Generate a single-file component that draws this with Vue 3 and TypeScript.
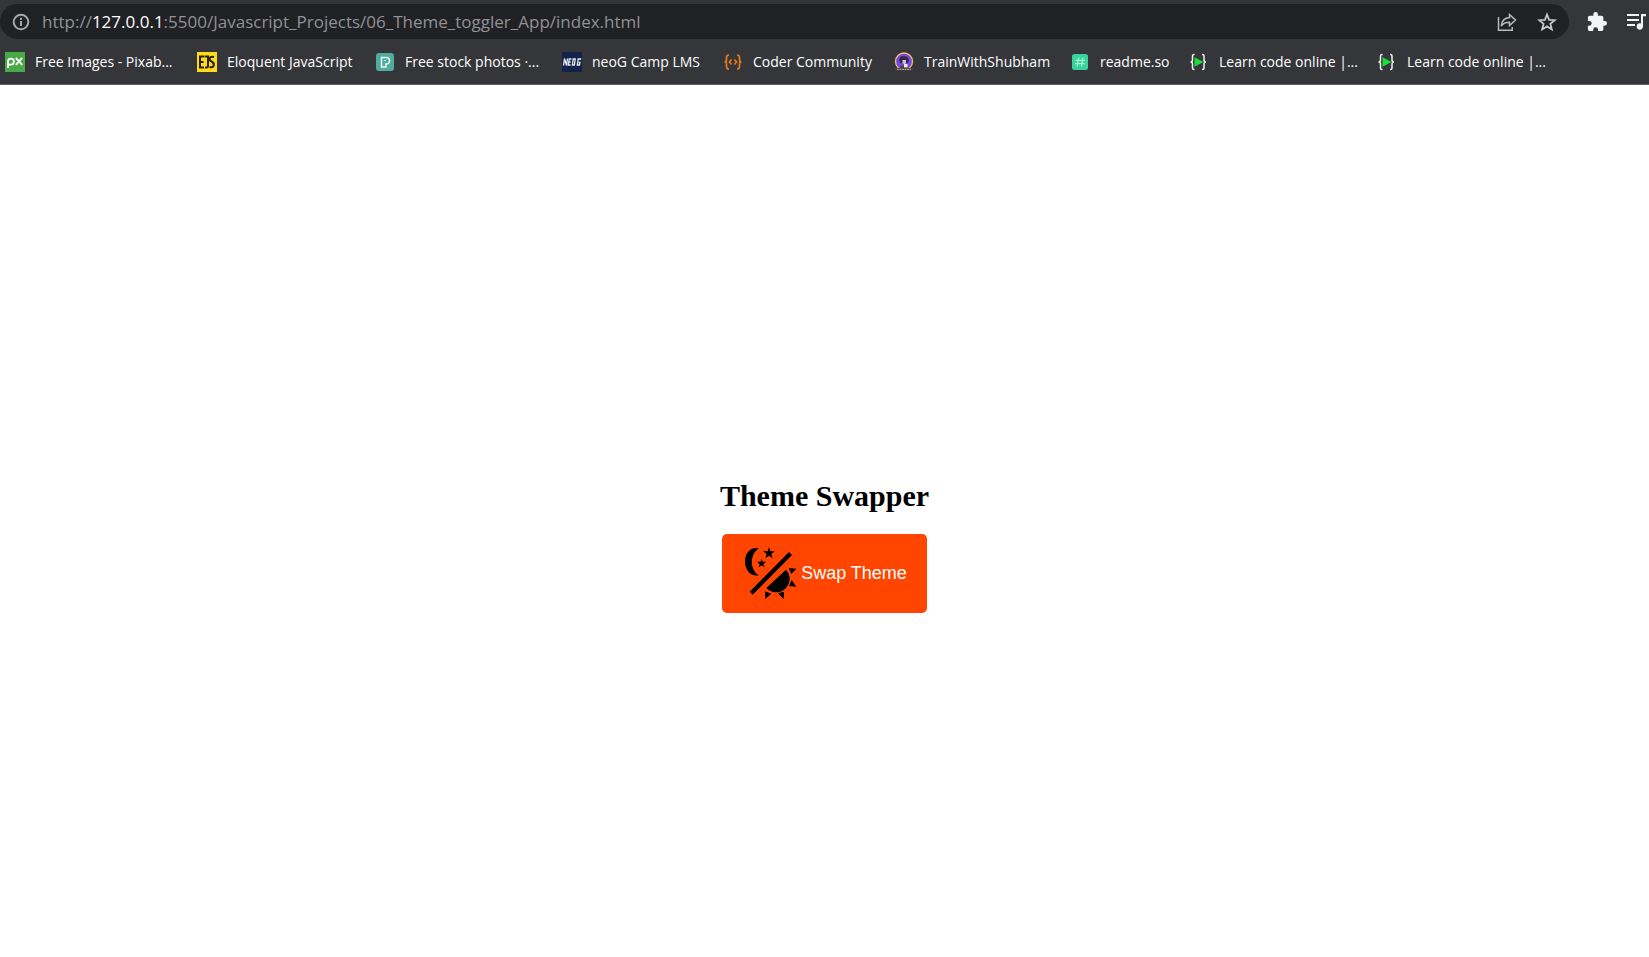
<script setup lang="ts">
import { ref } from 'vue'

interface Bookmark {
  icon: string
  label: string
}

const bookmarks: Bookmark[] = [
  { icon: 'px', label: 'Free Images - Pixab...' },
  { icon: 'ejs', label: 'Eloquent JavaScript' },
  { icon: 'pexels', label: 'Free stock photos ·...' },
  { icon: 'neog', label: 'neoG Camp LMS' },
  { icon: 'coder', label: 'Coder Community' },
  { icon: 'train', label: 'TrainWithShubham' },
  { icon: 'readme', label: 'readme.so' },
  { icon: 'learn', label: 'Learn code online |...' },
  { icon: 'learn', label: 'Learn code online |...' },
]

const dark = ref(false)
</script>

<template>
  <div class="window">
    <header class="chrome">
      <div class="toolbar">
        <div class="omnibox">
          <button class="icon-button" type="button" aria-label="Site information">
            <svg width="18" height="18" viewBox="0 0 18 18" fill="none" stroke="#a5a8ac" stroke-width="2">
              <circle cx="9" cy="9" r="7.3" />
              <path d="M9 8v5M9 4.8v2" />
            </svg>
          </button>
          <p class="url">http://<span class="host">127.0.0.1</span>:5500/Javascript_Projects/06_Theme_toggler_App/index.html</p>
          <button class="icon-button" type="button" aria-label="Share this page">
            <svg width="20" height="20" viewBox="0 0 20 20" fill="none" stroke="#b9bbbf" stroke-width="1.5">
              <path d="M1.5 5v13.2h13.7V15" />
              <path d="M12.5 2.5 18.5 8l-6 5.5v-3.3c-4 0-6.3 1-8.3 3.8C4.800 9 8 6 12.500 5.600z" />
            </svg>
          </button>
          <button class="icon-button" type="button" aria-label="Bookmark this page">
            <svg width="20" height="20" viewBox="0 0 20 20" fill="none" stroke="#c4c6c9" stroke-width="1.800">
              <path d="m10 2.500 2.100 5.300 5.700.4-4.400 3.600 1.400 5.600-4.800-3-4.800 3 1.400-5.600-4.400-3.600 5.700-.4z" />
            </svg>
          </button>
        </div>
        <button class="icon-button extensions" type="button" aria-label="Extensions">
          <svg width="20" height="20" viewBox="1 1 22 22" fill="#f1f3f4">
            <path d="M20.500 11H19V7c0-1.100-.9-2-2-2h-4V3.500a2.500 2.500 0 0 0-5 0V5H4c-1.100 0-2 .9-2 2v3.800h1.500a2.700 2.700 0 0 1 0 5.400H2V20c0 1.100.9 2 2 2h3.800v-1.500a2.700 2.700 0 0 1 5.400 0V22H17c1.100 0 2-.9 2-2v-4h1.500a2.500 2.500 0 0 0 0-5z" />
          </svg>
        </button>
        <button class="icon-button" type="button" aria-label="Media controls">
          <svg width="20" height="18" viewBox="0 0 20 18" fill="#f1f3f4">
            <path d="M0 1h12v2H0zM0 6h12v2H0zM0 11h8v2H0zM14 1h5v2.300h-3V13.500a3.200 3.200 0 1 1-2-3z" />
          </svg>
        </button>
      </div>

      <nav class="bookmarks" aria-label="Bookmarks">
        <a v-for="(item, index) in bookmarks" :key="index" class="bookmark" href="#">
          <svg class="favicon" width="20" height="20" viewBox="0 0 20 20" aria-hidden="true">
            <template v-if="item.icon === 'px'">
              <path fill="#48a947" d="M0 0h20v20H0z" />
              <g fill="none" stroke="#fff" stroke-width="1.800">
                <path d="M3 16V9a3 3 0 1 1 3 3.600H3" />
                <path d="m10.800 5.800 6.400 7M17.200 5.800l-6.400 7" />
              </g>
            </template>
            <template v-else-if="item.icon === 'ejs'">
              <path fill="#ffd91c" d="M0 0h20v20H0z" />
              <g fill="none" stroke="#27230c" stroke-width="2">
                <path d="M7 4.500H3v11h4M3 10h3.500M7.500 4.500H11V14q0 2-3 1.500M17 5c-5-1.500-5.500 3-2.500 4.500 4 2 2.500 7-2 5.500" />
              </g>
            </template>
            <template v-else-if="item.icon === 'pexels'">
              <rect x="1" y="1" width="18" height="18" rx="3" fill="#4fac9f" />
              <path d="M6.500 5.500h4.800a3.200 3.200 0 0 1 0 6.500H11v3H6.500z" fill="none" stroke="#eef8f6" stroke-width="1.500" />
              <path d="M9 8.500h2" stroke="#d5ece8" />
            </template>
            <template v-else-if="item.icon === 'neog'">
              <path fill="#14214a" d="M0 0h20v20H0z" />
              <path d="m1.500 13.500 1-7 2 7 1-7M9.500 7H7.200l-.9 6h2.300M6.800 10h2M13.200 7h-2l-.8 6h2zM18.300 8l.2-1h-2.300l-.9 6h2.200l.4-2.500h-1.200" fill="none" stroke="#e8eaf0" stroke-width="1.300" />
            </template>
            <template v-else-if="item.icon === 'coder'">
              <g fill="none" stroke="#e87818" stroke-width="1.700">
                <path d="M6 3Q3.500 3 3.500 5.500V8Q3.500 10 1.500 10q2 0 2 2v2.500Q3.500 17 6 17M14 3q2.500 0 2.500 2.500V8q0 2 2 2-2 0-2 2v2.500Q16.500 17 14 17M8.500 7.500 6.500 10l2 2.500M11.500 7.500l2 2.500-2 2.500" />
              </g>
            </template>
            <template v-else-if="item.icon === 'train'">
              <circle cx="10" cy="9.500" r="8.500" fill="#7047ea" stroke="#f1c55b" stroke-width="1.300" />
              <path d="M6 11C4 5 7 3.800 10.200 4.300c4 0 5.600 3 4 6.700z" fill="#33283d" />
              <path d="M8.500 8H12v3l-1.500 1.300L8.500 11z" fill="#d6c4b8" />
              <path d="M6 16c0-4 8-4 8 0z" fill="#4a4054" />
              <path d="M10 12h3.500v3.500H10z" fill="#eee" />
              <path d="M0 15.800h20v3.200H0z" fill="#413a4c" />
              <path d="M3 17.300h14" stroke="#d9b35b" stroke-dasharray="2 .5" />
            </template>
            <template v-else-if="item.icon === 'readme'">
              <rect x="2" y="2" width="16" height="16" rx="2.500" fill="#39d39c" />
              <path d="m8.700 5.500-1.500 9M13 5.500l-1.500 9M5.500 8.300h9.500M5 11.700h9.500" stroke="#a5f5d7" stroke-width="1.200" />
            </template>
            <template v-else>
              <path d="M5.500 2.500H5Q3.500 2.500 3.500 4v4q0 2-2 2 2 0 2 2v4q0 1.500 1.500 1.500h.5M13 2.500h.5Q15 2.500 15 4v4q0 2 2 2-2 0-2 2v4q0 1.500-1.500 1.500H13" fill="none" stroke="#f1f1f1" stroke-width="1.500" />
              <path d="m5.500 5.200 9 4.800-9 4.800z" fill="#17df38" />
            </template>
          </svg>
          <span>{{ item.label }}</span>
        </a>
      </nav>
    </header>

    <main class="page" :class="{ dark }">
      <h1 class="title">Theme Swapper</h1>
      <button class="swap" type="button" @click="dark = !dark">
        <svg width="60" height="60" viewBox="18 21 180 180" aria-hidden="true">
          <path d="M72 37C45 32 30 53 30 77s17 46 42 41C44 103 43 55 72 37z" />
          <path d="m102 33 4 13h14l-11 8 4 13-11-8-11 8 4-13-11-8h14z" />
          <path d="m80 68 3 9h11l-9 7 4 10-9-6-9 6 3-10-8-7h11z" />
          <path d="m162 48 9 9L53 176l-9-9z" />
          <path d="M153 101a40 40 0 0 1-59 55z" />
          <path d="m161 96 23 2-15 16zM170 132l14 20-22-2zM147 167l-1 22-17-17zM90 166l19 7-18 16z" />
        </svg>
        <span>Swap Theme</span>
      </button>
    </main>
  </div>
</template>

<style>
body {
  margin: 0;
}
</style>

<style scoped>
.window {
  display: flex;
  flex-direction: column;
  min-height: 100vh;
  overflow: hidden;
}

.chrome {
  padding-top: 4px;
  background: #35363a;
  border-bottom: 1px solid #5d5e62;
  font-family: "Segoe UI", "Open Sans", sans-serif;
}

.toolbar {
  display: flex;
  align-items: center;
  padding-right: 2px;
}

.omnibox {
  display: flex;
  flex: 1;
  align-items: center;
  height: 35px;
  padding: 0 12px;
  border-radius: 18px;
  background: #202124;
}

.icon-button {
  display: flex;
  flex: none;
  padding: 0;
  border: 0;
  background: none;
}

.omnibox .icon-button + .icon-button {
  margin-left: 20px;
}

.extensions {
  margin: 0 20px 0 18px;
}

.url {
  flex: 1;
  margin: 0 0 0 12px;
  color: #909296;
  font-size: 17px;
  line-height: 24px;
  white-space: nowrap;
}

.host {
  color: #fff;
}

.bookmarks {
  display: grid;
  grid-template-columns: 192px 178px 187px 161px 171px 176px 119px 188px 188px;
  height: 45px;
  padding-left: 5px;
}

.bookmark {
  display: flex;
  align-items: center;
  gap: 10px;
  color: #fff;
  font-size: 14px;
  line-height: 20px;
  text-decoration: none;
  white-space: nowrap;
}

.favicon {
  flex: none;
}

.page {
  display: flex;
  flex: 1;
  flex-direction: column;
  align-items: center;
  justify-content: center;
  padding-top: 49px;
  background: #fff;
  color: #000;
}

.page.dark {
  background: #000;
  color: #fff;
}

.title {
  margin: 0 0 21px;
  font: 700 30px/34px "Liberation Serif", serif;
}

.swap {
  display: flex;
  align-items: center;
  padding: 9px 20px 10px 19px;
  border: 0;
  border-radius: 5px;
  background: #ff4500;
  color: #fff;
  font: 18px/20px "Liberation Sans", sans-serif;
  cursor: pointer;
}
</style>
